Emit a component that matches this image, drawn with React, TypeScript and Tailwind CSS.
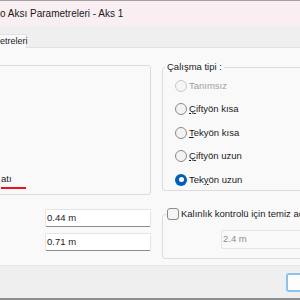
import React from "react";

type Opt = { pre: string; key: string; post: string; disabled?: boolean; checked?: boolean };

const options: Opt[] = [
  { pre: "", key: "", post: "Tanımsız", disabled: true },
  { pre: "", key: "Ç", post: "iftyön kısa" },
  { pre: "", key: "T", post: "ekyön kısa" },
  { pre: "", key: "Ç", post: "iftyön uzun" },
  { pre: "Tek", key: "y", post: "ön uzun", checked: true },
];

function Radio({ opt }: { opt: Opt }) {
  return (
    <div className="flex items-center h-[23.5px] gap-[2px]">
      {opt.checked ? (
        <span className="flex items-center justify-center w-[12px] h-[12px] rounded-full bg-[#005fb8]">
          <span className="w-[5px] h-[5px] rounded-full bg-white" />
        </span>
      ) : (
        <span
          className={
            opt.disabled
              ? "w-[12px] h-[12px] rounded-full border border-[#c9c9c9] bg-[#f5f5f5]"
              : "w-[12px] h-[12px] rounded-full border border-[#8a8a8a] bg-[#f3f3f3]"
          }
        />
      )}
      <span className={opt.disabled ? "text-[#a0a0a0]" : "text-[#1b1b1b]"}>
        {opt.pre}
        {opt.key && <u className="underline-offset-[1px]">{opt.key}</u>}
        {opt.post}
      </span>
    </div>
  );
}

export default function App() {
  return (
    <div
      className="w-[300px] h-[300px] overflow-hidden flex flex-col bg-[#f9f9f9] text-[9.5px] text-[#1b1b1b]"
      style={{ fontFamily: '"Liberation Sans", Arial, sans-serif' }}
    >
      <div className="h-px bg-[#a3a3a3] shrink-0" />
      {/* title bar */}
      <div className="h-[25px] shrink-0 bg-[#f9eef1] flex items-center text-[10px] text-[#1a1a1a] whitespace-nowrap">
        <span>o Aksı Parametreleri - Aks 1</span>
      </div>
      {/* tabs */}
      <div className="h-[22px] shrink-0 bg-[#efefef] flex items-end">
        <div className="h-[14px] w-[27px] bg-[#f9f9f9] border-r border-t border-[#e2e2e2] flex items-center text-[9px] whitespace-nowrap">
          etreleri
        </div>
        <div className="flex-1 border-b border-[#e2e2e2]" />
      </div>

      {/* content */}
      <div className="flex-1 flex flex-col">
        <div className="flex mt-[17px] -ml-[10px] gap-[11px] items-start">
          <div className="w-[161px] h-[130px] shrink-0 rounded-[3px] border border-[#dcdcdc] flex flex-col justify-end pl-[10px] pb-[5px]">
            <span className="leading-[12px] whitespace-nowrap">atı</span>
            <span className="mt-[2px] h-[2px] w-[25px] bg-[#e81123]" />
          </div>
          <fieldset className="w-[160px] h-[130px] shrink-0 mt-[-4px] rounded-[3px] border border-[#dcdcdc] pl-[12px]">
            <legend className="px-[2px] -ml-[10px] leading-[12px] whitespace-nowrap">Çalışma tipi :</legend>
            <div className="flex flex-col mt-[1px]">
              {options.map((o, i) => (
                <Radio key={i} opt={o} />
              ))}
            </div>
          </fieldset>
        </div>

        <div className="flex mt-[13px] gap-[11px] items-start">
          <div className="w-[151px] shrink-0 flex flex-col gap-[6px] pl-[45px] pt-[1px]">
            <div className="h-[18px] bg-white border border-[#e5e5e5] border-b-[#8a8a8a] rounded-[2px] flex items-center pl-[1px]">
              0.44 m
            </div>
            <div className="h-[18px] bg-white border border-[#e5e5e5] border-b-[#8a8a8a] rounded-[2px] flex items-center pl-[1px]">
              0.71 m
            </div>
          </div>
          <fieldset className="w-[160px] h-[51px] shrink-0 rounded-[3px] border border-[#dcdcdc] pl-[58px]">
            <legend className="flex items-center gap-[2px] -ml-[54px] pr-[2px] leading-[12px] whitespace-nowrap">
              <span className="w-[12px] h-[12px] rounded-[3px] border border-[#8a8a8a] bg-[#f5f5f5]" />
              Kalınlık kontrolü için temiz açıklık
            </legend>
            <div className="mt-[10px] h-[19px] w-[100px] bg-[#f9f9f9] border border-[#e5e5e5] rounded-[2px] flex items-center pl-[1px] text-[#8f8f8f]">
              2.4 m
            </div>
          </fieldset>
        </div>
      </div>

      {/* footer */}
      <div className="h-[33px] shrink-0 bg-[#efefef] border-t border-[#e8e8e8] flex items-start justify-start pl-[286px] pt-[7px]">
        <div className="h-[19px] w-[60px] shrink-0 rounded-[3px] border-2 border-[#8cc2ec] bg-[#fdfdfd]" />
      </div>
      <div className="h-[2px] shrink-0 bg-[#8f8f8f]" />
    </div>
  );
}
